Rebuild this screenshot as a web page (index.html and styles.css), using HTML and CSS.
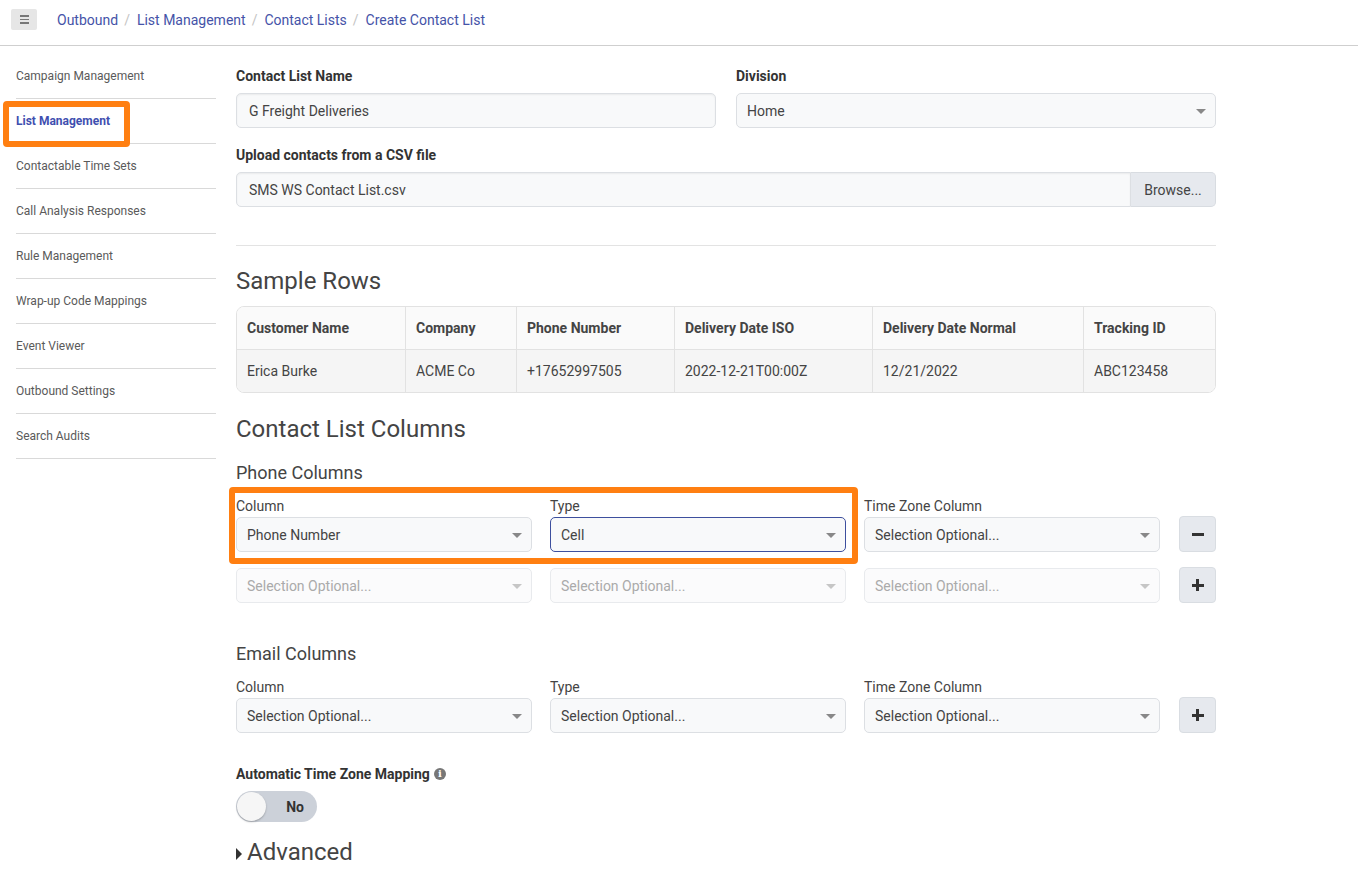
FILE: index.html
```html
<!DOCTYPE html>
<html>
<head>
<meta charset="utf-8">
<link rel="stylesheet" href="styles.css">
</head>
<body>
<header class="topbar">
  <button class="menu-btn"><span></span><span></span><span></span></button>
  <nav class="crumbs">
    <a>Outbound</a><span class="sep">/</span>
    <a>List Management</a><span class="sep">/</span>
    <a>Contact Lists</a><span class="sep">/</span>
    <a>Create Contact List</a>
  </nav>
</header>
<div class="layout">
  <aside class="sidebar">
    <div class="nav-item">Campaign Management</div>
    <div class="nav-item active">List Management<span class="hl hl-side"></span></div>
    <div class="nav-item">Contactable Time Sets</div>
    <div class="nav-item">Call Analysis Responses</div>
    <div class="nav-item">Rule Management</div>
    <div class="nav-item">Wrap-up Code Mappings</div>
    <div class="nav-item">Event Viewer</div>
    <div class="nav-item">Outbound Settings</div>
    <div class="nav-item">Search Audits</div>
  </aside>
  <main class="main">
    <div class="two-col">
      <div class="group">
        <label class="lbl">Contact List Name</label>
        <div class="input">G Freight Deliveries</div>
      </div>
      <div class="group">
        <label class="lbl">Division</label>
        <div class="select">Home<i class="caret"></i></div>
      </div>
    </div>
    <div class="group">
      <label class="lbl">Upload contacts from a CSV file</label>
      <div class="file-group">
        <div class="input file-name">SMS WS Contact List.csv</div>
        <div class="browse">Browse...</div>
      </div>
    </div>
    <hr class="divider">
    <h2 class="h2 sample-h">Sample Rows</h2>
    <table class="sample">
      <thead>
        <tr><th class="c1">Customer Name</th><th class="c2">Company</th><th class="c3">Phone Number</th><th class="c4">Delivery Date ISO</th><th class="c5">Delivery Date Normal</th><th>Tracking ID</th></tr>
      </thead>
      <tbody>
        <tr><td>Erica Burke</td><td>ACME Co</td><td>+17652997505</td><td>2022-12-21T00:00Z</td><td>12/21/2022</td><td>ABC123458</td></tr>
      </tbody>
    </table>
    <h2 class="h2 clc-h">Contact List Columns</h2>
    <h3 class="h3">Phone Columns</h3>
    <div class="col-row first">
      <div class="field"><div class="flbl">Column</div><div class="select">Phone Number<i class="caret"></i></div></div>
      <div class="field"><div class="flbl">Type</div><div class="select focus">Cell<i class="caret"></i></div></div>
      <div class="field"><div class="flbl">Time Zone Column</div><div class="select">Selection Optional...<i class="caret"></i></div></div>
      <div class="btn-cell"><button class="sq-btn"><span class="minus"></span></button></div>
      <span class="hl hl-row"></span>
    </div>
    <div class="col-row second">
      <div class="field"><div class="select disabled">Selection Optional...<i class="caret"></i></div></div>
      <div class="field"><div class="select disabled">Selection Optional...<i class="caret"></i></div></div>
      <div class="field"><div class="select disabled">Selection Optional...<i class="caret"></i></div></div>
      <div class="btn-cell"><button class="sq-btn"><span class="plus"></span></button></div>
    </div>
    <h3 class="h3 email-h">Email Columns</h3>
    <div class="col-row">
      <div class="field"><div class="flbl">Column</div><div class="select">Selection Optional...<i class="caret"></i></div></div>
      <div class="field"><div class="flbl">Type</div><div class="select">Selection Optional...<i class="caret"></i></div></div>
      <div class="field"><div class="flbl">Time Zone Column</div><div class="select">Selection Optional...<i class="caret"></i></div></div>
      <div class="btn-cell"><button class="sq-btn"><span class="plus"></span></button></div>
    </div>
    <div class="lbl atz">Automatic Time Zone Mapping <span class="info">i</span></div>
    <div class="toggle"><span class="knob"></span><span class="tog-txt">No</span></div>
    <div class="advanced"><span class="tri"></span>Advanced</div>
  </main>
</div>
</body>
</html>
```
FILE: styles.css
```css
* { box-sizing: border-box; }
html, body { margin: 0; padding: 0; background: #fff; }
body { font-family: Roboto, "Liberation Sans", Arial, sans-serif; color: #444; font-size: 14px; }

.topbar { height: 46px; border-bottom: 1px solid #cfcfcf; display: flex; align-items: center; padding-left: 11px; }
.menu-btn { width: 26px; height: 21px; background: #e6e6e6; border: none; border-radius: 2px; padding: 0; display: flex; flex-direction: column; align-items: center; justify-content: center; gap: 2px; margin-bottom: 6px; }
.menu-btn span { display: block; width: 9px; height: 1.4px; background: #777; }
.crumbs { margin-left: 20px; display: flex; align-items: center; font-size: 14px; margin-bottom: 6px; }
.crumbs a { color: #4553a8; }
.crumbs .sep { color: #c4c4c4; padding: 0 7px 0 6px; }

.layout { display: flex; }
.sidebar { width: 216px; padding-left: 16px; padding-top: 8px; flex: none; }
.nav-item { position: relative; height: 45px; border-bottom: 1px solid #d9d9d9; font-size: 12px; color: #5a5a5a; display: flex; align-items: center; }
.nav-item.active { color: #3f4fb0; font-weight: 700; }

.hl { position: absolute; border: 6px solid #ff7f11; border-radius: 4px; pointer-events: none; }
.hl-side { left: -13px; top: 2px; width: 127px; height: 46px; }
.hl-row { left: -7px; top: -11px; width: 629px; height: 77px; }

.main { width: 980px; margin-left: 20px; padding-top: 21px; }
.two-col { display: grid; grid-template-columns: 1fr 1fr; column-gap: 20px; }
.group { margin-bottom: 18px; }
.lbl { display: block; font-size: 14px; font-weight: 700; color: #333; line-height: 19px; margin-bottom: 7px; }
.input, .select { height: 35px; border: 1px solid #dcdfe3; border-radius: 5px; background: #f8f9fa; font-size: 14px; color: #444; padding: 0 12px; display: flex; align-items: center; position: relative; }
.input { box-shadow: inset 0 1px 2px rgba(0,0,0,0.06); }
.select { padding-left: 10px; }
.caret { position: absolute; right: 9px; top: 15px; width: 0; height: 0; border-left: 5px solid transparent; border-right: 5px solid transparent; border-top: 5px solid #888; }
.file-group { display: flex; }
.file-name { flex: 1; border-radius: 5px 0 0 5px; }
.browse { width: 85px; height: 35px; background: #e6e9ee; border: 1px solid #d8dce1; border-left: none; border-radius: 0 5px 5px 0; display: flex; align-items: center; justify-content: center; font-size: 14px; color: #444; }

.divider { border: none; border-top: 1px solid #e3e3e3; margin: 38px 0 0; }
.h2 { font-size: 24px; font-weight: 400; line-height: 29px; margin: 0; color: #444; }
.sample-h { margin-top: 21px; margin-bottom: 10px; }

.sample { width: 100%; border-collapse: separate; border-spacing: 0; border: 1px solid #e2e2e2; border-radius: 8px; overflow: hidden; font-size: 14px; }
.sample th, .sample td { text-align: left; padding: 0 10px; height: 43px; border-right: 1px solid #e2e2e2; }
.sample th:last-child, .sample td:last-child { border-right: none; }
.sample th { font-weight: 700; color: #444; background: #fafafa; border-bottom: 1px solid #e2e2e2; }
.sample td { background: #f5f5f5; color: #444; height: 42px; }
.sample .c1 { width: 169px; } .sample .c2 { width: 111px; } .sample .c3 { width: 158px; } .sample .c4 { width: 198px; } .sample .c5 { width: 211px; }

.clc-h { margin-top: 22px; }
.h3 { font-size: 18px; font-weight: 400; line-height: 22px; margin: 18px 0 14px; color: #444; }
.email-h { margin-top: 40px; }

.col-row { position: relative; display: grid; grid-template-columns: 296px 296px 296px 38px; column-gap: 18px; align-items: end; }
.col-row.second { margin-top: 15px; }
.flbl { font-size: 14px; line-height: 17px; color: #444; margin-bottom: 2px; }
.select.focus { border-color: #3d4f9e; background: #f8f9fa; }
.select.disabled { color: #aaa; background: #fbfbfc; border-color: #e8eaed; }
.select.disabled .caret { border-top-color: #c6c6c6; }
.btn-cell { display: flex; justify-content: flex-end; }
.sq-btn { width: 37px; height: 36px; background: #e6e9ee; border: 1px solid #d9dde2; border-radius: 4px; padding: 0; display: flex; align-items: center; justify-content: center; position: relative; }
.minus { display: block; width: 12px; height: 3px; background: #333; }
.plus { display: block; width: 12px; height: 12px; position: relative; }
.plus::before, .plus::after { content: ""; position: absolute; background: #333; }
.plus::before { left: 0; top: 4.5px; width: 12px; height: 3px; }
.plus::after { left: 4.5px; top: 0; width: 3px; height: 12px; }

.atz { margin-top: 32px; margin-bottom: 8px; display: flex; align-items: center; gap: 4px; line-height: 18px; }
.info { display: inline-flex; width: 12px; height: 12px; border-radius: 50%; background: #777; color: #fff; font-size: 10px; font-weight: 700; align-items: center; justify-content: center; font-family: "DejaVu Serif", serif; }
.toggle { width: 81px; height: 31px; border-radius: 16px; background: #ccd1d9; position: relative; display: flex; align-items: center; justify-content: flex-end; padding-right: 13px; }
.knob { position: absolute; left: 1px; top: 1px; width: 29px; height: 29px; border-radius: 50%; background: #f6f6f6; box-shadow: 0 1px 2px rgba(0,0,0,0.25); }
.tog-txt { font-size: 14px; font-weight: 700; color: #333; }
.advanced { margin-top: 16px; font-size: 24px; line-height: 29px; color: #444; display: flex; align-items: center; }
.tri { width: 0; height: 0; border-top: 6px solid transparent; border-bottom: 6px solid transparent; border-left: 6px solid #333; margin-right: 5px; margin-top: 2px; }
```
